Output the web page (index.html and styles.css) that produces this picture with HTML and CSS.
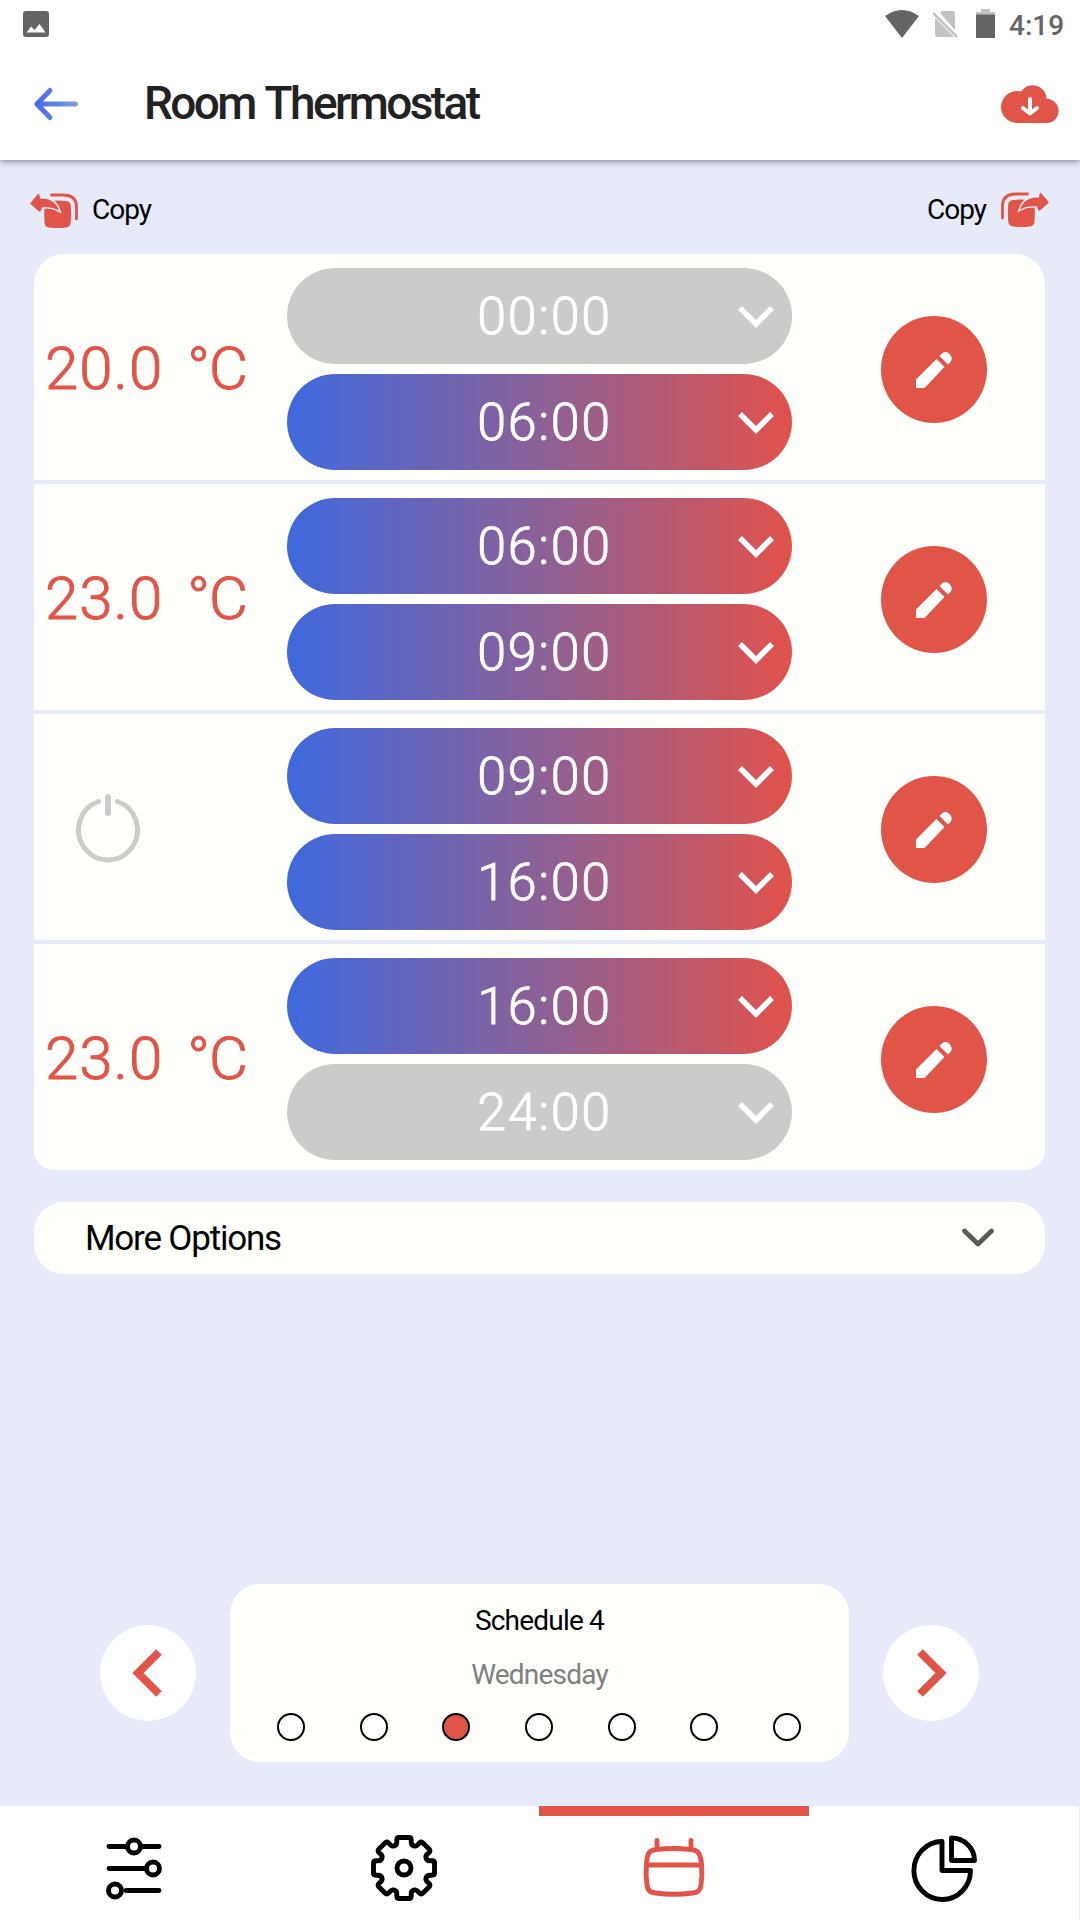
FILE: index.html
```html
<!doctype html>
<html lang="en">
<head>
<meta charset="utf-8">
<title>Room Thermostat</title>
<link rel="stylesheet" href="styles.css">
</head>
<body>
<svg class="defs">
	<symbol id="chevron" viewBox="0 0 36 24"><path d="M2 3L18 19L34 3" fill="none" stroke="currentColor" stroke-width="5.5"/></symbol>
	<symbol id="pencil" viewBox="0 0 36 36"><path d="M0 27.5L20.5 7L28.5 15L8.5 36H0Z"/><path d="M23.500 4L26 1.500Q30 -1.500 33.500 2Q37.500 6 34.500 10L32 12.500Z"/></symbol>
	<symbol id="copy" viewBox="0 0 48 38">
		<path class="line" d="M21.500 3H33Q46.500 3 46.500 15V27"/>
		<path d="M20 9Q28 8.200 36 9Q40.500 9.500 40.800 14Q41.500 23 40.800 30Q40.500 35 36 35.500Q28 36.500 19 35.500Q15 35 14.600 31Q13.800 23 14.500 14Q15 9.500 20 9Z"/>
		<path class="cut" d="M0 11.500L7.500 2.500Q9 1 9.500 3L10 6.500C20 6 26.500 10.500 29 18.500C24 15.500 18 14.500 12 15.500L10.800 19Q10 20.500 8.500 19Z"/>
		<path d="M0 11.500L7.500 2.500Q9 1 9.500 3L10 6.500C20 6 26.500 10.500 29 18.500C24 15.500 18 14.500 12 15.500L10.800 19Q10 20.500 8.500 19Z"/>
	</symbol>
</svg>

<header>
	<div class="status">
		<svg class="photo" viewBox="0 0 26 26"><path fill-rule="evenodd" d="M3 0H23Q26 0 26 3V23Q26 26 23 26H3Q0 26 0 23V3Q0 0 3 0ZM3.500 21.500H22.500L16.500 13L11.500 19L8 15.500Z"/></svg>
		<svg class="wifi" viewBox="0 0 34 28"><path d="M0 6Q17 -6 34 6L17 28Z"/></svg>
		<svg class="sim" viewBox="0 0 26 28"><path d="M8 3L10 1H21Q23 1 23 3V20ZM3 8L22 27H5Q3 27 3 24Z"/><path d="M1 3L25 27" stroke="#c2c2c2" stroke-width="2.500"/></svg>
		<svg class="battery" viewBox="0 0 19 29"><path fill="#c2c2c2" d="M5 0H14V3H19V7H0V3H5Z"/><path d="M0 5.500H19V29H0Z"/></svg>
		<span class="clock">4:19</span>
	</div>
	<div class="toolbar">
		<svg class="back" viewBox="0 0 44 34">
			<defs><linearGradient id="fade" gradientUnits="userSpaceOnUse" x1="0" y1="0" x2="44" y2="0"><stop offset="0" stop-color="#4069df"/><stop offset="1" stop-color="#839fe4"/></linearGradient></defs>
			<path d="M41.500 17H3M16 3.500L3 17L16 30.500" fill="none" stroke="url(#fade)" stroke-width="5" stroke-linecap="round" stroke-linejoin="round"/>
		</svg>
		<h1>Room Thermostat</h1>
		<svg class="cloud" viewBox="0 0 60 40"><path d="M16 39A16 16 0 1 1 20 7.500A14 14 0 0 1 45.700 14.700A12.200 12.200 0 0 1 47 39Z"/><path d="M29 15V29M22 24L29 29.500L36 24" fill="none" stroke="#fff" stroke-width="4" stroke-linecap="round" stroke-linejoin="round"/></svg>
	</div>
</header>

<main>
	<div class="copybar">
		<div class="copy"><svg><use href="#copy"/></svg><span>Copy</span></div>
		<div class="copy right"><svg><use href="#copy"/></svg><span>Copy</span></div>
	</div>

	<div class="schedule">
		<div class="row">
			<div class="temp"><span>20.0</span><span class="unit">°C</span></div>
			<div class="times">
				<div class="pill off"><span>00:00</span><svg><use href="#chevron"/></svg></div>
				<div class="pill"><span>06:00</span><svg><use href="#chevron"/></svg></div>
			</div>
			<div class="edit"><svg><use href="#pencil"/></svg></div>
		</div>
		<div class="row">
			<div class="temp"><span>23.0</span><span class="unit">°C</span></div>
			<div class="times">
				<div class="pill"><span>06:00</span><svg><use href="#chevron"/></svg></div>
				<div class="pill"><span>09:00</span><svg><use href="#chevron"/></svg></div>
			</div>
			<div class="edit"><svg><use href="#pencil"/></svg></div>
		</div>
		<div class="row">
			<div class="temp"><svg class="power" viewBox="0 0 64 68"><path d="M22.500 7.500A29.500 30 0 1 0 41.500 7.500" stroke-width="5"/><path d="M32 3V19" stroke-width="6"/></svg></div>
			<div class="times">
				<div class="pill"><span>09:00</span><svg><use href="#chevron"/></svg></div>
				<div class="pill"><span>16:00</span><svg><use href="#chevron"/></svg></div>
			</div>
			<div class="edit"><svg><use href="#pencil"/></svg></div>
		</div>
		<div class="row">
			<div class="temp"><span>23.0</span><span class="unit">°C</span></div>
			<div class="times">
				<div class="pill"><span>16:00</span><svg><use href="#chevron"/></svg></div>
				<div class="pill off"><span>24:00</span><svg><use href="#chevron"/></svg></div>
			</div>
			<div class="edit"><svg><use href="#pencil"/></svg></div>
		</div>
	</div>

	<div class="more">
		<span>More Options</span>
		<svg viewBox="0 0 32 20"><path d="M2.500 3L16 16L29.500 3" fill="none" stroke="#5a5a58" stroke-width="4.800" stroke-linecap="round" stroke-linejoin="round"/></svg>
	</div>

	<div class="picker">
		<div class="arrow"><svg viewBox="0 0 30 48"><path d="M26 3L5 24L26 45"/></svg></div>
		<div class="panel">
			<div class="name">Schedule 4</div>
			<div class="day">Wednesday</div>
			<div class="dots"><i></i><i></i><i class="on"></i><i></i><i></i><i></i><i></i></div>
		</div>
		<div class="arrow"><svg viewBox="0 0 30 48"><path d="M4 3L25 24L4 45"/></svg></div>
	</div>
</main>

<nav>
	<div class="tab">
		<svg viewBox="0 0 68 68"><path d="M8 12.500H26M42 12.500H58M8 34.500H45M25 56.500H58"/><circle cx="33" cy="12.500" r="6.500"/><circle cx="52" cy="34.500" r="6.500"/><circle cx="14" cy="56.500" r="6.500"/></svg>
	</div>
	<div class="tab">
		<svg viewBox="-34 -34 68 68">
			<path id="cog" d="M-5 -30.500H5Q7.200 -30.500 7.200 -28V-26C7.200 -22 11.500 -20.500 14 -23.500L15.200 -24.800Q17 -27 19 -25L25 -19Q27 -17 24.800 -15.200L23.500 -14C20.500 -11.500 22 -7.200 26 -7.200H28Q30.500 -7.200 30.500 -5"/>
			<use href="#cog" transform="rotate(90)"/><use href="#cog" transform="rotate(180)"/><use href="#cog" transform="rotate(270)"/>
			<circle r="7"/>
		</svg>
	</div>
	<div class="tab active">
		<svg viewBox="0 0 68 68"><path d="M6.500 30C7 20 9 16 16.500 15.500Q34 13.500 51 15.500C58.500 16 60.500 20 61.500 30Q62.500 41 61 51C60 57 57.500 58.500 52.500 59Q34 61.500 15.500 59C10.500 58.500 8 57 7 51Q5.500 41 6.500 30ZM7 31H61M17 6.500V15M51 6.500V15"/></svg>
	</div>
	<div class="tab">
		<svg viewBox="0 0 68 68"><path d="M32 7.500V36.500H60.500A28.300 29 0 1 1 32 7.500ZM41.500 4V26.500H64.500C64.500 14 54 4 41.500 4Z"/></svg>
	</div>
</nav>
</body>
</html>
```
FILE: styles.css
```css
*{
	box-sizing:border-box;
}
body{
	margin:0;
	height:1920px;
	display:flex;
	flex-direction:column;
	background:#e6eaf9;
	color:#000;
	font-family:Roboto,"Liberation Sans",sans-serif;
	overflow:hidden;
}
svg{
	display:block;
	flex:none;
	overflow:visible;
}
.defs{
	position:absolute;
	width:0;
	height:0;
}
header{
	height:160px;
	flex:none;
	background:#fff;
	box-shadow:0 1px 7px rgba(20,20,60,.55);
}
.status{
	height:48px;
	padding:9px 16px 0 23px;
	display:flex;
	align-items:flex-start;
	fill:#646464;
	color:#646464;
}
.photo{
	width:26px;
	height:26px;
	margin-top:2px;
	margin-right:auto;
}
.wifi{
	width:34px;
	height:28px;
	margin-top:1px;
	margin-right:13px;
}
.sim{
	width:26px;
	height:28px;
	fill:#c2c2c2;
	margin-top:1px;
	margin-right:18px;
}
.battery{
	width:19px;
	height:29px;
	margin-right:14px;
}
.clock{
	width:55px;
	font-size:28px;
	font-weight:500;
	line-height:33px;
	white-space:nowrap;
}
.toolbar{
	height:112px;
	padding:0 19px 0 34px;
	display:flex;
	align-items:center;
}
.back{
	width:44px;
	height:34px;
}
h1{
	margin:0 auto 2px 66px;
	font-size:46px;
	font-weight:500;
	line-height:60px;
	color:#222;
	letter-spacing:-2.6px;
	word-spacing:2px;
}
.cloud{
	width:60px;
	height:40px;
	fill:#e15549;
}
main{
	flex:1;
	padding:0 35px 0 34px;
}
.copybar{
	height:94px;
	margin:0 -4px;
	padding-top:32px;
	display:flex;
	justify-content:space-between;
}
.copy{
	display:flex;
	gap:14px;
	height:38px;
	font-size:28px;
	line-height:36px;
	letter-spacing:-1px;
}
.copy svg{
	width:48px;
	height:38px;
	fill:#e15549;
}
.line{
	fill:none;
	stroke:#e15549;
	stroke-width:2.8;
	stroke-linecap:round;
}
.cut{
	stroke:#e6eaf9;
	stroke-width:3;
}
.right{
	flex-direction:row-reverse;
	gap:15px;
}
.right svg{
	transform:translateY(-1px) scaleX(-1);
}
.schedule{
	height:916px;
	overflow:hidden;
	border-radius:30px 30px 20px 20px;
}
.row{
	height:226px;
	margin-bottom:4px;
	background:#fffffb;
	display:flex;
	align-items:center;
}
.temp{
	width:253px;
	padding:4px 0 0 11px;
	display:flex;
	color:#e15549;
	font-size:60px;
	font-weight:300;
	line-height:70px;
	letter-spacing:1px;
	-webkit-text-stroke:1px #e15549;
}
.temp .unit{
	margin-left:24px;
	letter-spacing:-1px;
}
.power{
	width:64px;
	height:68px;
	margin:-3px 0 0 31px;
	fill:none;
	stroke:#cbcbc9;
	stroke-linecap:round;
}
.times{
	width:505px;
	padding-top:4px;
	display:flex;
	flex-direction:column;
	gap:10px;
}
.pill{
	height:96px;
	border-radius:48px;
	background:linear-gradient(to right,#3f69de,#8b6198 50%,#e1524b);
	color:#fff;
	font-size:52px;
	font-weight:300;
	letter-spacing:1.6px;
	display:flex;
	align-items:center;
	padding:0 18px 0 64px;
}
.pill span{
	flex:1;
	text-align:center;
	-webkit-text-stroke:.9px #fff;
}
.pill.off{
	background:#cbcbc9;
}
.pill svg{
	width:36px;
	height:24px;
	margin-top:2px;
}
.edit{
	width:106px;
	height:107px;
	margin:5px 0 0 89px;
	border-radius:50%;
	background:#e15549;
	display:flex;
	align-items:center;
	justify-content:center;
}
.edit svg{
	width:36px;
	height:36px;
	fill:#fff;
}
.more{
	height:72px;
	margin-top:32px;
	padding:0 51px;
	border-radius:30px;
	background:#fffffb;
	display:flex;
	align-items:center;
	justify-content:space-between;
	font-size:35px;
	letter-spacing:-1.2px;
}
.more svg{
	width:32px;
	height:20px;
}
.picker{
	margin:310px 66px 0;
	display:flex;
	align-items:center;
	justify-content:space-between;
}
.arrow{
	width:96px;
	height:96px;
	border-radius:50%;
	background:#fff;
	display:flex;
	align-items:center;
	justify-content:center;
}
.arrow svg{
	width:30px;
	height:48px;
	fill:none;
	stroke:#e15549;
	stroke-width:8;
}
.panel{
	width:619px;
	height:178px;
	padding-top:19px;
	border-radius:30px;
	background:#fffffb;
	text-align:center;
	font-size:28px;
	line-height:36px;
	letter-spacing:-.8px;
}
.day{
	margin-top:18px;
	color:#808080;
}
.dots{
	margin:20px 48px 0 47px;
	display:flex;
	justify-content:space-between;
}
.dots i{
	width:28px;
	height:28px;
	border:2px solid #000;
	border-radius:50%;
	background:#fff;
}
.dots .on{
	background:#e15549;
}
nav{
	height:114px;
	flex:none;
	margin-right:1px;
	background:#fff;
	display:flex;
}
.tab{
	width:269.6px;
	border-top:10px solid transparent;
	padding-top:18px;
	display:flex;
	justify-content:center;
	color:#000;
}
.tab svg{
	width:68px;
	height:68px;
	fill:none;
	stroke:currentColor;
	stroke-width:4.9;
	stroke-linecap:round;
	stroke-linejoin:round;
}
.active{
	border-top-color:#e15549;
	color:#e15549;
}
```
